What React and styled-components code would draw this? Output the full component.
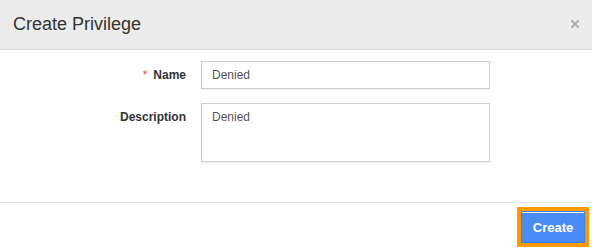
import React from "react";
import styled, { createGlobalStyle } from "styled-components";

const Global = createGlobalStyle`
  html, body { margin: 0; padding: 0; background: #fff; }
  body { font-family: "Liberation Sans", Arial, Helvetica, sans-serif; }
  * { box-sizing: border-box; }
`;

const Modal = styled.div`
  width: 592px;
  height: 251px;
  display: flex;
  flex-direction: column;
  background: #fff;
`;

const Header = styled.div`
  height: 50px;
  flex: none;
  background: #ececec;
  border-bottom: 1px solid #dcdcdc;
  display: flex;
  align-items: center;
  justify-content: space-between;
  padding: 0 13px 1px 13px;
`;

const Title = styled.h3`
  margin: 0;
  font-size: 18px;
  font-weight: normal;
  color: #333;
  line-height: 20px;
`;

const Close = styled.button`
  border: 0;
  background: none;
  padding: 0;
  width: 8px;
  height: 8px;
  display: flex;
  cursor: pointer;
`;

const Body = styled.div`
  flex: 1;
  padding-top: 11px;
  display: grid;
  grid-template-columns: 186px 289px;
  column-gap: 15px;
  row-gap: 14px;
  align-content: start;
`;

const Label = styled.label`
  font-size: 12px;
  font-weight: bold;
  color: #333;
  text-align: right;
  padding-top: ${(p) => p.$top}px;
  line-height: 14px;
`;

const Star = styled.span`
  color: #dd4b39;
  font-weight: normal;
  margin-right: 6px;
`;

const fieldStyles = `
  width: 289px;
  border: 1px solid #cfcfcf;
  box-shadow: 0 1px 1px rgba(0,0,0,0.06);
  font-family: "Liberation Sans", Arial, Helvetica, sans-serif;
  font-size: 12px;
  color: #555;
  padding: 0 10px;
  outline: none;
  margin: 0;
  background: #fff;
`;

const Input = styled.input`
  ${fieldStyles}
  height: 28px;
  line-height: 26px;
`;

const TextArea = styled.textarea`
  ${fieldStyles}
  height: 59px;
  padding-top: 6px;
  line-height: 14px;
  resize: none;
  display: block;
`;

const Footer = styled.div`
  flex: none;
  height: 49px;
  border-top: 1px solid #e5e5e5;
  display: flex;
  justify-content: flex-end;
  padding: 8px 7px 0 0;
`;

const PrimaryButton = styled.button`
  width: 64px;
  height: 32px;
  background: #4a8cf6;
  border: 1px solid #3b7de9;
  box-shadow: inset 0 1px 0 #ffffff;
  outline: 4px solid #ff9900;
  outline-offset: 0;
  color: #fff;
  font-family: "Liberation Sans", Arial, Helvetica, sans-serif;
  font-size: 13px;
  font-weight: bold;
  padding: 1px 0 0 0;
  cursor: pointer;
`;

export default function App() {
  return (
    <>
      <Global />
      <Modal>
        <Header>
          <Title>Create Privilege</Title>
          <Close aria-label="Close">
            <svg width="8" height="8" viewBox="0 0 8 8">
              <path d="M1 1 L7 7 M7 1 L1 7" stroke="#b0b0b0" strokeWidth="2.2" strokeLinecap="square" />
            </svg>
          </Close>
        </Header>
        <Body>
          <Label $top={7}>
            <Star>*</Star>Name
          </Label>
          <Input defaultValue="Denied" />
          <Label $top={7}>Description</Label>
          <TextArea defaultValue="Denied" />
        </Body>
        <Footer>
          <PrimaryButton>Create</PrimaryButton>
        </Footer>
      </Modal>
    </>
  );
}
